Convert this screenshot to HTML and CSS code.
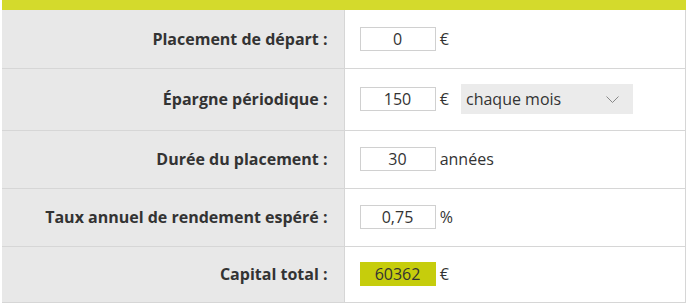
FILE: index.html
```html
<!DOCTYPE html>
<html lang="fr">
<head>
    <meta charset="UTF-8">
    <title>Simulateur d'épargne</title>
    <link rel="stylesheet" href="styles.css">
</head>
<body>
    <div class="calc">
        <div class="calc-top"></div>
        <table class="calc-table">
            <tr>
                <th>Placement de départ :</th>
                <td><input class="field" type="text" value="0"> <span class="unit">€</span></td>
            </tr>
            <tr>
                <th>Épargne périodique :</th>
                <td>
                    <input class="field" type="text" value="150"> <span class="unit">€</span>
                    <span class="period">
                        chaque mois
                        <svg width="13" height="7" viewBox="0 0 13 7"><path d="M0.5 0.5 L6.5 6.5 L12.5 0.5" fill="none" stroke="#888" stroke-width="1"/></svg>
                    </span>
                </td>
            </tr>
            <tr>
                <th>Durée du placement :</th>
                <td><input class="field" type="text" value="30"> <span class="unit">années</span></td>
            </tr>
            <tr>
                <th>Taux annuel de rendement espéré :</th>
                <td><input class="field" type="text" value="0,75"> <span class="unit">%</span></td>
            </tr>
            <tr>
                <th>Capital total :</th>
                <td><input class="field result" type="text" value="60362" readonly> <span class="unit">€</span></td>
            </tr>
        </table>
    </div>
</body>
</html>
```

FILE: styles.css
```css
* {
    padding: 0;
    margin: 0;
    box-sizing: border-box;
}

body {
    background: #fff;
    font-family: "Open Sans", "Liberation Sans", sans-serif;
    color: #333;
}

.calc {
    width: 684px;
    margin-left: 2px;
}

.calc-top {
    height: 10px;
    background: #d4da2c;
}

.calc-table {
    width: 100%;
    border-collapse: collapse;
    border-right: solid 1px #d6d6d6;
}

.calc-table tr {
    height: 58px;
    border-bottom: solid 1px #d6d6d6;
}

.calc-table tr:nth-child(2) {
    height: 62px;
}

.calc-table tr:last-child {
    height: 56px;
}

.calc-table th {
    width: 342px;
    background: #e8e8e8;
    border-right: solid 1px #d6d6d6;
    text-align: right;
    padding-right: 16px;
    font-size: 16px;
    font-weight: 700;
    color: #333;
}

.calc-table td {
    padding-left: 15px;
    font-size: 16px;
    vertical-align: middle;
}

.field {
    width: 76px;
    height: 24px;
    border: solid 1px #d0d0d0;
    background: #fff;
    font-family: inherit;
    font-size: 16px;
    color: #333;
    text-align: center;
    vertical-align: middle;
    outline: none;
}

.result {
    background: #c6cd0c;
    border-color: #c6cd0c;
}

.unit {
    display: inline-block;
    vertical-align: middle;
}

.period {
    display: inline-flex;
    align-items: center;
    justify-content: space-between;
    width: 172px;
    height: 30px;
    margin-left: 8px;
    padding: 0 14px 0 5px;
    background: #ebebeb;
    vertical-align: middle;
}
```
